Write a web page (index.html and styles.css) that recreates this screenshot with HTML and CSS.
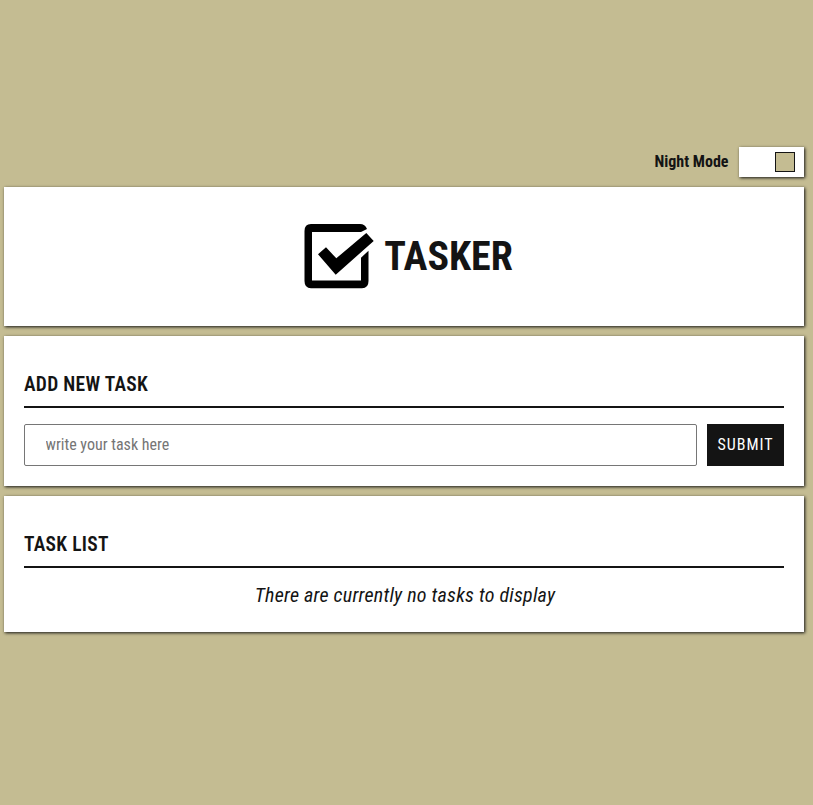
FILE: index.html
```html
<!DOCTYPE html>
<html lang="en">
<head>
<meta charset="utf-8">
<title>Tasker</title>
<link rel="stylesheet" href="styles.css">
</head>
<body>
<main class="app">
  <div class="mode"><span class="mode-label">Night Mode</span><button class="toggle" aria-label="Night Mode"><span class="knob"></span></button></div>
  <header class="card brand">
    <svg class="logo" viewBox="0 0 72 68" width="72" height="68"><path d="M65 7Q63 2 58 2H9Q2.500 2 2.500 9V59Q2.500 66.300 9 66.300H60Q66.500 66.300 66.500 59V28.700L59 35.700V58.500H10V10H59Z" fill="#000"/><path d="M16 32.300L24 25.300L34.300 36.300L64.300 11L71.700 19L33.700 52.700Z" fill="#000"/></svg>
    <h1>TASKER</h1>
  </header>
  <section class="card add">
    <h2>ADD NEW TASK</h2>
    <form class="row"><input type="text" placeholder="write your task here"><button type="button" class="submit">SUBMIT</button></form>
  </section>
  <section class="card list">
    <h2>TASK LIST</h2>
    <p class="empty">There are currently no tasks to display</p>
  </section>
</main>
</body>
</html>
```
FILE: styles.css
```css
* { box-sizing: border-box; }
body { margin: 0; background: #c4bc92; color: #141414; font-family: "Roboto Condensed", Roboto, sans-serif; font-stretch: 75%; }
.app { width: 800px; margin-left: 4px; padding-top: 147px; }
.mode { display: flex; justify-content: flex-end; align-items: center; height: 30px; margin-bottom: 10px; }
.mode-label { font-size: 16px; font-weight: 700; margin-right: 10.5px; padding-bottom: 2px; }
.toggle { width: 65px; height: 30px; border: 0; padding: 0 9px; background: #fff; display: flex; align-items: center; justify-content: flex-end; box-shadow: 1px 1px 3px #141414; }
.knob { width: 20px; height: 20px; border: 1px solid #141414; background: #c4bc92; }
.card { background: #fff; box-shadow: 1px 1px 3px #141414; margin-bottom: 10px; padding: 0 20px; }
.brand { height: 139px; display: flex; justify-content: center; align-items: center; padding-left: 27px; }
.logo { margin-bottom: 2px; }
h1 { margin: 0 0 0 10px; font-size: 40px; }
h2 { margin: 0 0 16px; font-size: 19.5px; font-weight: 650; letter-spacing: 0.3px; line-height: 24px; height: 35px; border-bottom: 2px solid #141414; }
.add { height: 150px; padding-top: 37px; }
.list { height: 136px; padding-top: 37px; }
.row { display: flex; gap: 10px; }
input { flex: 1; height: 42px; border: 1px solid #767676; border-radius: 2px; padding: 0 20px 2px 20.5px; font: inherit; font-stretch: 75%; font-size: 16px; }
.submit { width: 77px; height: 42px; border: 0; padding: 0 0 2px; background: #141414; color: #fff; font: inherit; font-stretch: 75%; font-weight: 450; font-size: 16px; letter-spacing: 1px; }
.empty { margin: -1px 0 0; padding-left: 2px; text-align: center; font-style: italic; font-weight: 370; font-size: 20px; letter-spacing: 0.23px; }
```
